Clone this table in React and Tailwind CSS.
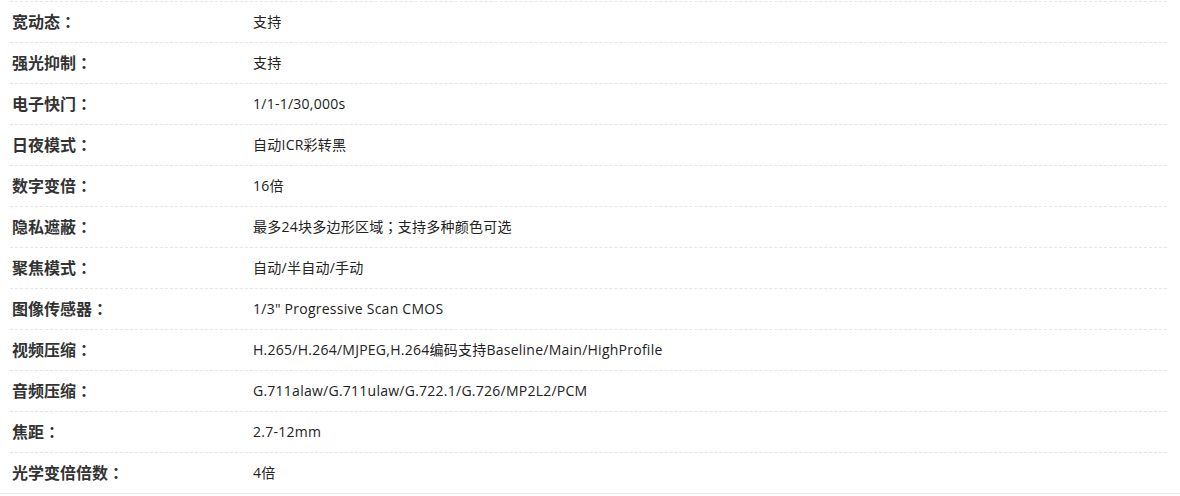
import React from 'react';

const specs = [
    ['宽动态', '支持'],
    ['强光抑制', '支持'],
    ['电子快门', '1/1-1/30,000s'],
    ['日夜模式', '自动ICR彩转黑'],
    ['数字变倍', '16倍'],
    ['隐私遮蔽', ['最多24块多边形区域', '支持多种颜色可选']],
    ['聚焦模式', '自动/半自动/手动'],
    ['图像传感器', '1/3" Progressive Scan CMOS'],
    ['视频压缩', 'H.265/H.264/MJPEG,H.264编码支持Baseline/Main/HighProfile'],
    ['音频压缩', 'G.711alaw/G.711ulaw/G.722.1/G.726/MP2L2/PCM'],
    ['焦距', '2.7-12mm'],
    ['光学变倍倍数', '4倍'],
];

// centred full-width punctuation, like the original font draws it
const Punct = ({ children }) => (
    <span className="font-['Noto_Sans_CJK_TC',sans-serif]">{children}</span>
);

export default function App() {
    return (
        <div className="w-[1180px] h-[496px] bg-white overflow-hidden font-['Open_Sans','Noto_Sans_CJK_SC',sans-serif] text-[#333]">
            <div className="border-b border-[#e8e8e8]">
                <div className="pl-[10px] pr-[13px] pt-px">
                    {specs.map(([label, value]) => (
                        <div key={label} className="flex items-center h-[41px] pb-[2px] border-t border-dashed border-[#e6e6e6]">
                            <div className="w-[243px] pl-[2px] text-[16px] font-bold text-[#333]">
                                {label}<Punct>：</Punct>
                            </div>
                            <div className="text-[14px] tracking-[0.25px] text-[#222]">
                                {Array.isArray(value)
                                    ? <>{value[0]}<Punct>；</Punct>{value[1]}</>
                                    : value}
                            </div>
                        </div>
                    ))}
                </div>
            </div>
        </div>
    );
}
